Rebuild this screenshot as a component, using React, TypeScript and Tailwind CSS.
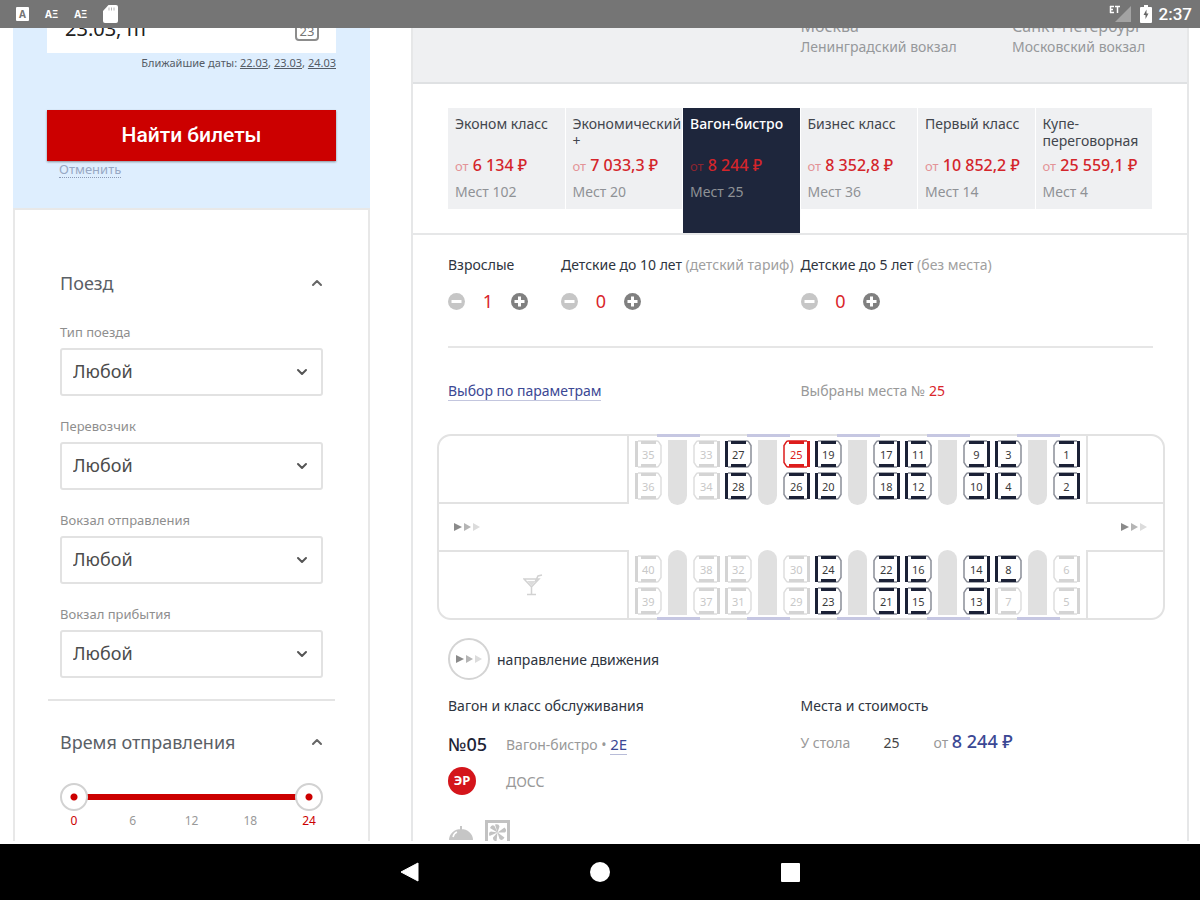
import { useState } from "react";
import { ChevronDown, ChevronUp } from "lucide-react";
import clsx from "clsx";

const classes = [
  { name: "Эконом класс", price: "6 134", seats: 102 },
  { name: "Экономический +", price: "7 033,3", seats: 20 },
  { name: "Вагон-бистро", price: "8 244", seats: 25 },
  { name: "Бизнес класс", price: "8 352,8", seats: 36 },
  { name: "Первый класс", price: "10 852,2", seats: 14 },
  { name: "Купе-переговорная", price: "25 559,1", seats: 4 },
];

const filters = [
  { id: "type", label: "Тип поезда" },
  { id: "carrier", label: "Перевозчик" },
  { id: "from", label: "Вокзал отправления" },
  { id: "to", label: "Вокзал прибытия" },
];

// seat groups between the tables, left to right
const upperSeats = [
  [[35, 36]],
  [[33, 34], [27, 28]],
  [[25, 26], [19, 20]],
  [[17, 18], [11, 12]],
  [[9, 10], [3, 4]],
  [[1, 2]],
];

const lowerSeats = [
  [[40, 39]],
  [[38, 37], [32, 31]],
  [[30, 29], [24, 23]],
  [[22, 21], [16, 15]],
  [[14, 13], [8, 7]],
  [[6, 5]],
];

const taken = [35, 36, 33, 34, 40, 39, 38, 37, 32, 31, 30, 29, 7, 6, 5];

const StatusBar = () => {
  return (
    <header className="relative z-10 flex h-7 shrink-0 items-center justify-between bg-[#757575] pr-2 pl-4 text-white">
      <div className="flex items-center gap-4">
        <span className="flex h-[14px] w-[13px] items-center justify-center rounded-[1px] bg-white text-[10px] leading-none font-bold text-[#757575]">
          A
        </span>
        <span className="text-[10px] font-bold">AΞ</span>
        <span className="text-[10px] font-bold">AΞ</span>
        <svg className="h-[18px] w-[15px]" viewBox="0 0 15 18" fill="currentColor">
          <path d="M5.500 0H13a2 2 0 0 1 2 2v14a2 2 0 0 1-2 2H2a2 2 0 0 1-2-2V6z" />
          <path d="M6 2.500v3M8.500 2.500v3M11 2.500v3" stroke="#b5b5b5" />
        </svg>
      </div>
      <div className="flex items-center">
        <svg className="h-[18px] w-[22px]" viewBox="0 0 22 18">
          <path d="M22 1v16H6z" fill="#a3a3a3" />
          <path d="M1 1.500h4M1 4.500h3M1 7.500h4M1.500 1v7M6 1.500h5M8.500 1v7" stroke="#fff" strokeWidth="1.500" />
        </svg>
        <svg className="ml-[9px] h-[18px] w-3" viewBox="0 0 12 18">
          <path d="M4 0h4v2h3a1 1 0 0 1 1 1v14a1 1 0 0 1-1 1H1a1 1 0 0 1-1-1V3a1 1 0 0 1 1-1h3z" fill="#fff" />
          <path d="M6.500 4.500L3.500 10h2v4L8.500 8.500h-2z" fill="#666" />
        </svg>
        <span className="ml-[7px] font-[Roboto] text-[17px] leading-7 font-medium">2:37</span>
      </div>
    </header>
  );
};

const SearchPanel = () => {
  return (
    <form className="-mt-6 h-[204px] bg-[#deeefe] px-[34px]" onSubmit={(e) => e.preventDefault()}>
      <label className="flex h-[49px] items-center justify-between bg-white pr-[17px] pl-[18px]">
        <input
          aria-label="Дата отправления"
          defaultValue="23.03, пт"
          className="min-w-0 flex-1 bg-transparent text-[20px] text-[#222] outline-none"
        />
        <svg className="h-6 w-6" viewBox="0 0 24 24" fill="none" stroke="#8c8c8c" strokeWidth="2">
          <rect x="1" y="2" width="22" height="21" rx="3" />
          <text x="12" y="19" textAnchor="middle" fontSize="13" fill="#777" stroke="none">23</text>
        </svg>
      </label>
      <p className="mt-[2px] text-right text-[11px] leading-4 text-[#555c66]">
        Ближайшие даты: <a href="#2203" className="underline">22.03</a>,{" "}
        <a href="#2303" className="underline">23.03</a>,{" "}
        <a href="#2403" className="underline">24.03</a>
      </p>
      <button
        type="submit"
        className="mt-[39px] block h-[51px] w-full bg-[#cc0000] font-[Roboto] text-[21px] font-medium text-white shadow-[0_1px_2px_#00000066]"
      >
        Найти билеты
      </button>
      <a
        href="#cancel"
        className="ml-3 block w-fit border-b border-dotted border-[#8c9ab5] text-[13px] leading-4 text-[#98a8c4]"
      >
        Отменить
      </a>
    </form>
  );
};

const SectionTitle = ({ children }: { children: string }) => {
  return (
    <button type="button" className="flex w-full items-center justify-between text-[18px] leading-6 text-[#5a6066]">
      {children}
      <ChevronUp className="-mr-0.5 size-4 text-[#666]" strokeWidth={3} />
    </button>
  );
};

const thumb =
  "pointer-events-none absolute inset-0 w-full appearance-none bg-transparent [&::-webkit-slider-thumb]:pointer-events-auto [&::-webkit-slider-thumb]:size-7 [&::-webkit-slider-thumb]:appearance-none [&::-webkit-slider-thumb]:rounded-full [&::-webkit-slider-thumb]:border-2 [&::-webkit-slider-thumb]:border-[#d2d2d2] [&::-webkit-slider-thumb]:bg-white [&::-webkit-slider-thumb]:bg-[radial-gradient(circle,#cc0000_3px,#ffffff_4px)]";

const TimeRange = () => {
  const [from, setFrom] = useState(0);
  const [to, setTo] = useState(24);

  return (
    <div className="mt-[29px]">
      <div className="relative flex h-7 items-center px-[14px]">
        <div className="h-[6px] w-full bg-[#cc0000]" />
        <input
          type="range"
          aria-label="Время от"
          min={0}
          max={24}
          value={from}
          onChange={(e) => setFrom(Math.min(+e.target.value, to))}
          className={thumb}
        />
        <input
          type="range"
          aria-label="Время до"
          min={0}
          max={24}
          value={to}
          onChange={(e) => setTo(Math.max(+e.target.value, from))}
          className={thumb}
        />
      </div>
      <div className="mt-[2px] flex justify-between px-1 text-[12px] leading-4 text-[#999]">
        {[0, 6, 12, 18, 24].map((h) => (
          <span key={h} className={clsx("w-5 text-center", (h === from || h === to) && "text-[#cc0000]")}>
            {h}
          </span>
        ))}
      </div>
    </div>
  );
};

const Sidebar = () => {
  return (
    <aside className="w-[357px] shrink-0">
      <SearchPanel />
      <div className="border-2 border-b-0 border-[#e8e8e8] px-[33px] pt-[61px]">
        <div className="px-3">
          <SectionTitle>Поезд</SectionTitle>
          <div className="mt-[27px] flex flex-col gap-5">
            {filters.map((f) => (
              <div key={f.id}>
                <label htmlFor={f.id} className="block text-[13px] leading-5 text-[#8e8e8e]">
                  {f.label}
                </label>
                <div className="relative mt-[6px]">
                  <select
                    id={f.id}
                    className="block h-12 w-full appearance-none rounded-[3px] border-2 border-[#e2e2e2] bg-white px-[11px] pb-[2px] text-[18px] text-[#4c4c4c]"
                  >
                    <option>Любой</option>
                  </select>
                  <ChevronDown className="pointer-events-none absolute top-4 right-[13px] size-4 text-[#555]" strokeWidth={3} />
                </div>
              </div>
            ))}
          </div>
        </div>
        <hr className="mt-[21px] border-t-2 border-[#e4e4e4]" />
        <div className="px-3 pt-[29px] pb-8">
          <SectionTitle>Время отправления</SectionTitle>
          <TimeRange />
        </div>
      </div>
    </aside>
  );
};

const ClassTabs = () => {
  const [active, setActive] = useState(2);

  return (
    <div className="grid grid-cols-6 items-start border-b-2 border-[#e6e7e8] pt-[24px] pr-[34px] pl-[35px]">
      {classes.map((c, i) => (
        <button
          key={c.name}
          type="button"
          onClick={() => setActive(i)}
          className={clsx(
            "mr-px flex flex-col pt-[7px] pl-[7px] text-left",
            i === active ? "h-[125px] bg-[#1e263c]" : "mb-6 h-[101px] bg-[#eff0f2]",
          )}
        >
          <span
            className={clsx("h-[39px] text-[14px] leading-[17px]", i === active ? "font-medium text-white" : "text-[#42464d]")}
          >
            {c.name}
          </span>
          <span className="text-[16px] leading-[22px] font-medium whitespace-nowrap text-[#d4252b]">
            <span className={clsx("text-[13px] font-normal", i === active ? "text-[#8c2530]" : "text-[#e39397]")}>от</span>{" "}
            {c.price} ₽
          </span>
          <span className="mt-1 text-[14px] leading-[22px] text-[#8f9296]">Мест {c.seats}</span>
        </button>
      ))}
    </div>
  );
};

const CounterIcon = ({ plus }: { plus?: boolean }) => {
  return (
    <svg className="size-[17px]" viewBox="0 0 17 17">
      <circle cx="8.500" cy="8.500" r="8.500" fill={plus ? "#808080" : "#c6c6c6"} />
      <path d={plus ? "M3.500 8.500h10M8.500 3.500v10" : "M3.500 8.500h10"} stroke="#fff" strokeWidth="3" />
    </svg>
  );
};

const Counter = ({ title, hint, initial }: { title: string; hint?: string; initial: number }) => {
  const [count, setCount] = useState(initial);

  return (
    <div>
      <p className="text-[14px] leading-5 whitespace-nowrap text-[#2e3440]">
        {title} {hint && <span className="text-[#a0a0a0]">{hint}</span>}
      </p>
      <div className="mt-[14px] flex w-20 items-center justify-between">
        <button type="button" aria-label="Меньше" onClick={() => setCount(Math.max(0, count - 1))}>
          <CounterIcon />
        </button>
        <span className="text-[18px] leading-6 text-[#d9252b]">{count}</span>
        <button type="button" aria-label="Больше" onClick={() => setCount(count + 1)}>
          <CounterIcon plus />
        </button>
      </div>
    </div>
  );
};

const Arrows = () => {
  return (
    <svg className="h-2 w-[27px]" viewBox="0 0 27 8">
      <path d="M0 0l8 4-8 4z" fill="#8a8a8a" />
      <path d="M10 0l7 4-7 4z" fill="#b5b5b5" />
      <path d="M19 0l7 4-7 4z" fill="#dcdcdc" />
    </svg>
  );
};

type SeatProps = { no: number; back: "left" | "right"; selected: boolean; onSelect: (no: number) => void };

const Seat = ({ no, back, selected, onSelect }: SeatProps) => {
  const free = !taken.includes(no);
  const color = selected ? "#dd1c1c" : free ? "#1b2136" : "#d4d4d4";
  const side = selected ? "#dd1c1c" : free ? "#8b8e98" : "#dedede";

  return (
    <button type="button" disabled={!free} onClick={() => onSelect(no)} className="grid h-7 w-[27px] place-items-center">
      <svg
        className={clsx("col-start-1 row-start-1 h-7 w-[27px]", back === "right" && "-scale-x-100")}
        viewBox="0 0 27 28"
        fill="none"
      >
        <path d="M3 1h19q1.500 0 2 1.500l2 3v17l-2 3q-.5 1.500-2 1.500H3" stroke={side} strokeWidth="1.500" />
        <path d="M1.500 1v26" stroke={color} strokeWidth="3" />
        <path d="M6 2.500h15M6 25.500h15" stroke={color} strokeWidth="3" />
      </svg>
      <span
        className={clsx(
          "col-start-1 row-start-1 text-[11px] leading-none",
          selected ? "text-[#dd1c1c]" : free ? "text-[#3a3a3a]" : "text-[#c8c8c8]",
        )}
      >
        {no}
      </span>
    </button>
  );
};

type SeatRowsProps = { groups: number[][][]; lower?: boolean; selected: number; onSelect: (no: number) => void };

const SeatRows = ({ groups, lower, selected, onSelect }: SeatRowsProps) => {
  return (
    <div className={clsx("flex gap-[6px] px-[6px]", lower ? "items-end pb-[3px]" : "items-start pt-1")}>
      {groups.map((group, i) => (
        <div key={i} className={clsx("flex gap-[6px]", lower ? "items-end" : "items-start")}>
          {i > 0 && <div className={clsx("h-[65px] w-[19px] bg-[#e0e0e0]", lower ? "rounded-t-full" : "rounded-b-full")} />}
          <div className="flex gap-[5px]">
            {group.map((column, j) => (
              <div key={j} className="flex flex-col gap-1">
                {column.map((no) => (
                  <Seat
                    key={no}
                    no={no}
                    back={i === 0 || j === 1 ? "left" : "right"}
                    selected={no === selected}
                    onSelect={onSelect}
                  />
                ))}
              </div>
            ))}
          </div>
        </div>
      ))}
    </div>
  );
};

const Windows = ({ className }: { className: string }) => {
  return (
    <div className={clsx("absolute inset-x-0 flex", className)}>
      <div className="flex-5" />
      <div className="flex w-[458px] gap-[47px] pl-[28px]">
        {[0, 1, 2, 3, 4].map((i) => (
          <div key={i} className="h-[3px] w-[43px] bg-[#c6c7e2]" />
        ))}
      </div>
      <div className="flex-2" />
    </div>
  );
};

const Carriage = ({ selected, onSelect }: { selected: number; onSelect: (no: number) => void }) => {
  return (
    <div className="relative mt-[33px] mr-[22px] ml-6 rounded-[14px] border-2 border-[#e2e2e2]">
      <Windows className="-top-[2px]" />
      <div className="flex h-[68px]">
        <div className="flex-5 border-r-2 border-b-2 border-[#e2e2e2]" />
        <SeatRows groups={upperSeats} selected={selected} onSelect={onSelect} />
        <div className="flex-2 border-b-2 border-l-2 border-[#e2e2e2]" />
      </div>
      <div className="flex h-[46px] items-center justify-between px-[15px]">
        <Arrows />
        <Arrows />
      </div>
      <div className="flex h-[68px]">
        <div className="flex flex-5 items-center justify-center border-t-2 border-r-2 border-[#e2e2e2]">
          <svg className="h-[22px] w-5" viewBox="0 0 20 22" fill="none" stroke="#d2d2d2" strokeWidth="1.500">
            <path d="M1 5h15l-7.500 8zM8.500 13v7M4 20.500h9M12 8l3-6 4-1" />
            <path d="M4 7h9l-4.500 5z" fill="#dcdcdc" stroke="none" />
          </svg>
        </div>
        <SeatRows groups={lowerSeats} lower selected={selected} onSelect={onSelect} />
        <div className="flex-2 border-t-2 border-l-2 border-[#e2e2e2]" />
      </div>
      <Windows className="-bottom-[2px]" />
    </div>
  );
};

const CarriageInfo = () => {
  return (
    <div className="grid grid-cols-2 pt-[16px] pr-[34px] pl-[35px]">
      <div>
        <h2 className="text-[14px] leading-5 text-[#2e3440]">Вагон и класс обслуживания</h2>
        <div className="mt-[14px] grid grid-cols-[58px_1fr] items-center gap-y-[9px] text-[14px] text-[#999]">
          <span className="text-[18px] leading-7 font-medium whitespace-nowrap text-[#1e2436]">№05</span>
          <span>
            Вагон-бистро •{" "}
            <a href="#2e" className="border-b border-[#b8bcd8] text-[15px] text-[#3b4894]">2Е</a>
          </span>
          <span className="flex size-7 items-center justify-center rounded-full bg-[#d4151b] text-[13px] font-bold text-white">
            ЭР
          </span>
          <span>ДОСС</span>
        </div>
        <div className="mt-[25px] flex items-start gap-[11px]">
          <svg className="mt-[6px] h-[18px] w-[26px]" viewBox="0 0 26 18">
            <path d="M1 14a12 11 0 0 1 24 0zM12 0h2v4h-2z" fill="#c6c6c6" />
            <path d="M5 11q1-4 4-5" stroke="#fff" strokeWidth="1.500" fill="none" />
            <path d="M0 15h26v2H0z" fill="#c6c6c6" />
          </svg>
          <svg className="size-[25px]" viewBox="0 0 25 25" fill="none" stroke="#c2c2c2">
            <rect x="1.500" y="1.500" width="22" height="22" strokeWidth="3" />
            <path
              d="M12.500 12.500L10 4.500q4-1 4.500 2zM12.500 12.500l7-5q3 3 .5 5zM12.500 12.500l7 5q-2 4-5 1.500zM12.500 12.500l-1 9q-4-1-3.500-4zM12.500 12.500l-8 3.500q-1.500-4 1.500-4.500zM12.500 12.500L5 8q1.500-4 4.500-2z"
              fill="#c2c2c2"
              stroke="none"
            />
          </svg>
        </div>
      </div>
      <div>
        <h2 className="text-[14px] leading-5 text-[#2e3440]">Места и стоимость</h2>
        <div className="mt-[11px] flex items-baseline text-[14px] leading-7 text-[#999]">
          <span className="w-[83px]">У стола</span>
          <span className="w-[50px] text-[#444]">25</span>
          <span>
            от <span className="text-[18px] font-medium text-[#3b4894]">8 244 ₽</span>
          </span>
        </div>
      </div>
    </div>
  );
};

const Details = () => {
  const [seat, setSeat] = useState(25);

  return (
    <main className="min-w-0 flex-1 border-x-2 border-[#e6e7e8]">
      <div className="-mt-3 grid grid-cols-2 border-b-2 border-[#dfe1e3] bg-[#eff0f2] pr-[34px] pb-[24px] pl-[35px] text-[#96989b]">
        <div className="col-start-2 grid grid-cols-[3fr_2fr] whitespace-nowrap">
          <div>
            <p className="text-[16px] leading-5">Москва</p>
            <p className="text-[14px] leading-[22px]">Ленинградский вокзал</p>
          </div>
          <div>
            <p className="text-[16px] leading-5">Санкт-Петербург</p>
            <p className="text-[14px] leading-[22px]">Московский вокзал</p>
          </div>
        </div>
      </div>
      <ClassTabs />
      <div className="pt-5 pr-[34px] pl-[35px]">
        <div className="grid grid-cols-2">
          <div className="grid grid-cols-[113px_1fr]">
            <Counter title="Взрослые" initial={1} />
            <Counter title="Детские до 10 лет" hint="(детский тариф)" initial={0} />
          </div>
          <Counter title="Детские до 5 лет" hint="(без места)" initial={0} />
        </div>
        <hr className="mt-[33px] border-t-2 border-[#e6e6e6]" />
        <div className="mt-[33px] grid grid-cols-2 text-[14px] leading-5">
          <div>
            <a href="#params" className="border-b border-[#c3c6de] text-[#3b4894]">Выбор по параметрам</a>
          </div>
          <p className="text-[#999]">
            Выбраны места № <span className="text-[#d9252b]">{seat}</span>
          </p>
        </div>
      </div>
      <Carriage selected={seat} onSelect={setSeat} />
      <div className="mt-[18px] flex items-center gap-[7px] px-[35px] text-[14px] text-[#2e3440]">
        <span className="flex size-[42px] items-center justify-center rounded-full border-2 border-[#d4d4d4]">
          <Arrows />
        </span>
        направление движения
      </div>
      <CarriageInfo />
    </main>
  );
};

const NavBar = () => {
  return (
    <nav className="relative z-10 flex h-14 shrink-0 items-center justify-center gap-[171px] bg-black text-white">
      <button type="button" aria-label="Назад">
        <svg className="h-5 w-[19px]" viewBox="0 0 19 20" fill="currentColor">
          <path d="M18 1v18L1 10z" stroke="currentColor" strokeLinejoin="round" />
        </svg>
      </button>
      <button type="button" aria-label="Домой" className="size-5 rounded-full bg-white" />
      <button type="button" aria-label="Недавние" className="size-[19px] rounded-[1px] bg-white" />
    </nav>
  );
};

const App = () => {
  return (
    <div className="flex h-screen flex-col bg-white font-['Noto_Sans','Liberation_Sans',sans-serif]">
      <StatusBar />
      <div className="mb-[3px] flex min-h-0 flex-1 items-start gap-[41px] overflow-hidden pr-[11px] pl-[13px]">
        <Sidebar />
        <Details />
      </div>
      <NavBar />
    </div>
  );
};

export default App;
